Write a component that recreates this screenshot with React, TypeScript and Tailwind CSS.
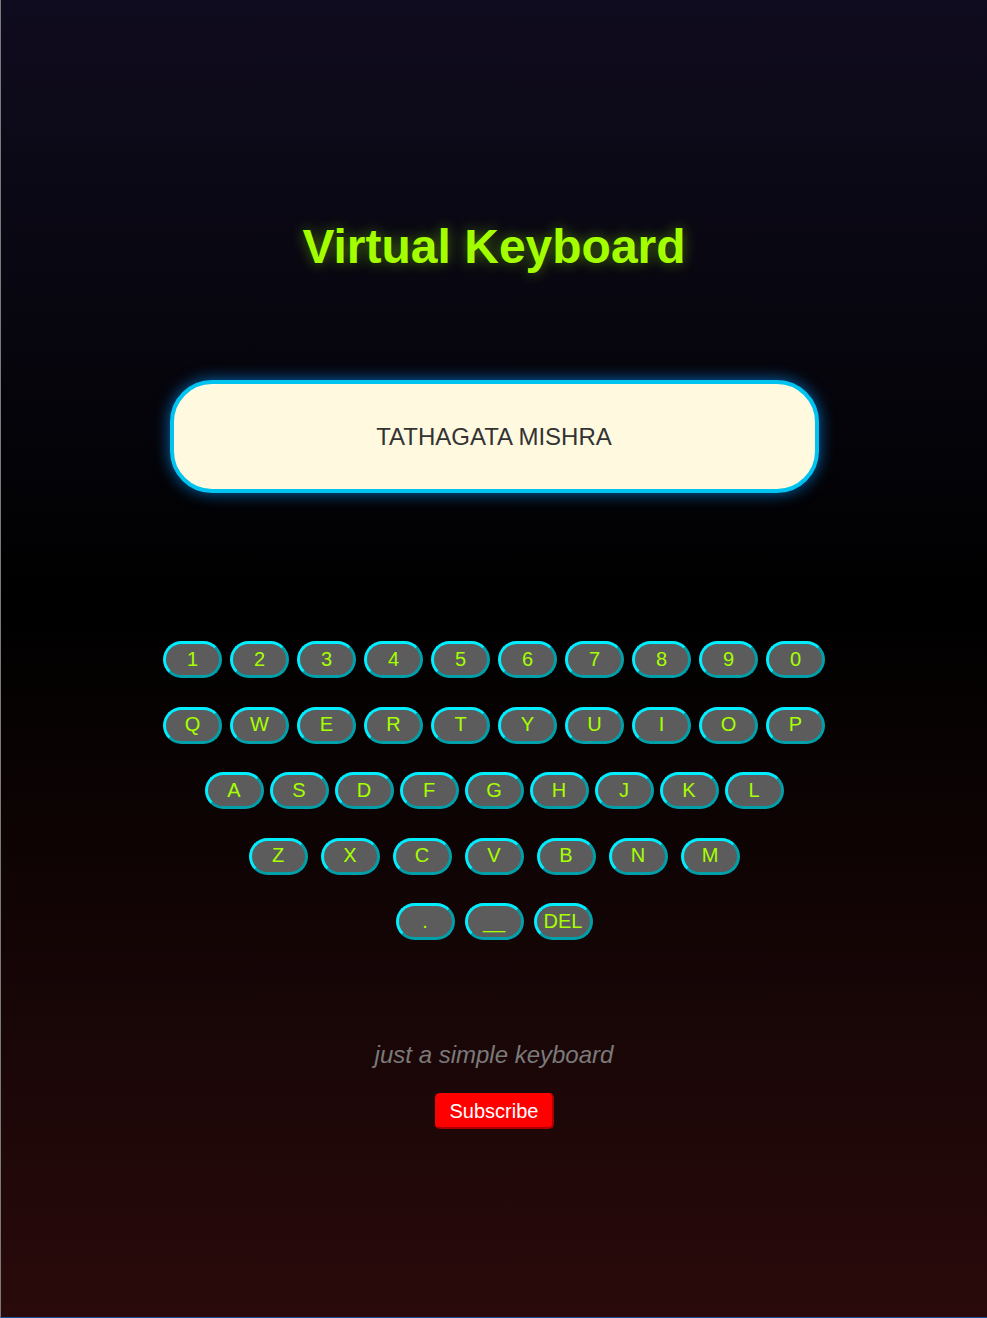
const rows: { keys: string[]; gap: string }[] = [
  { keys: ["1", "2", "3", "4", "5", "6", "7", "8", "9", "0"], gap: "gap-[8px]" },
  { keys: ["Q", "W", "E", "R", "T", "Y", "U", "I", "O", "P"], gap: "gap-[8px]" },
  { keys: ["A", "S", "D", "F", "G", "H", "J", "K", "L"], gap: "gap-[6px]" },
  { keys: ["Z", "X", "C", "V", "B", "N", "M"], gap: "gap-[13px]" },
  { keys: [".", "__", "DEL"], gap: "gap-[10px]" },
];

function Key({ label }: { label: string }) {
  return (
    <button
      className="w-[59px] h-[37px] pb-[2px] rounded-full bg-[#5c5c5c] border-[3px] [border-style:outset] border-[#00eeff] text-[20px] leading-none text-[#a6ff00] flex items-center justify-center"
    >
      {label}
    </button>
  );
}

export default function App() {
  return (
    <div
      className="min-h-[1318px] w-full flex flex-col items-center border-l border-l-[#7a7a7a] border-b border-b-[#1d4f8f] bg-[linear-gradient(to_bottom,#100c1f_0%,#000000_46%,#2a0a0b_100%)]"
      style={{ fontFamily: '"Liberation Sans", Arial, sans-serif' }}
    >
      <h1 className="mt-[219px] text-[48px] leading-[56px] font-bold text-[#a3ff00] [text-shadow:0_0_14px_rgba(150,255,0,0.45)]">
        Virtual Keyboard
      </h1>

      <div className="mt-[105px] w-[649px] h-[113px] rounded-[42px] border-4 border-[#00c3f0] bg-[#fff9df] shadow-[0_0_16px_rgba(0,150,255,0.7)] flex items-center justify-center">
        <span className="text-[24px] text-[#333333]">TATHAGATA MISHRA</span>
      </div>

      <div className="mt-[148px] flex flex-col items-center gap-[28.5px]">
        {rows.map((row, i) => (
          <div key={i} className={`flex ${row.gap}`}>
            {row.keys.map((k) => (
              <Key key={k} label={k} />
            ))}
          </div>
        ))}
      </div>

      <p className="mt-[101px] text-[24px] leading-[28px] italic text-[#7a7a7a]">
        just a simple keyboard
      </p>

      <button className="mt-[24px] w-[119px] h-[36px] rounded-[5px] bg-[#ff0000] border-2 [border-style:outset] border-[#ff0000] text-[20px] leading-none text-white">
        Subscribe
      </button>
    </div>
  );
}
